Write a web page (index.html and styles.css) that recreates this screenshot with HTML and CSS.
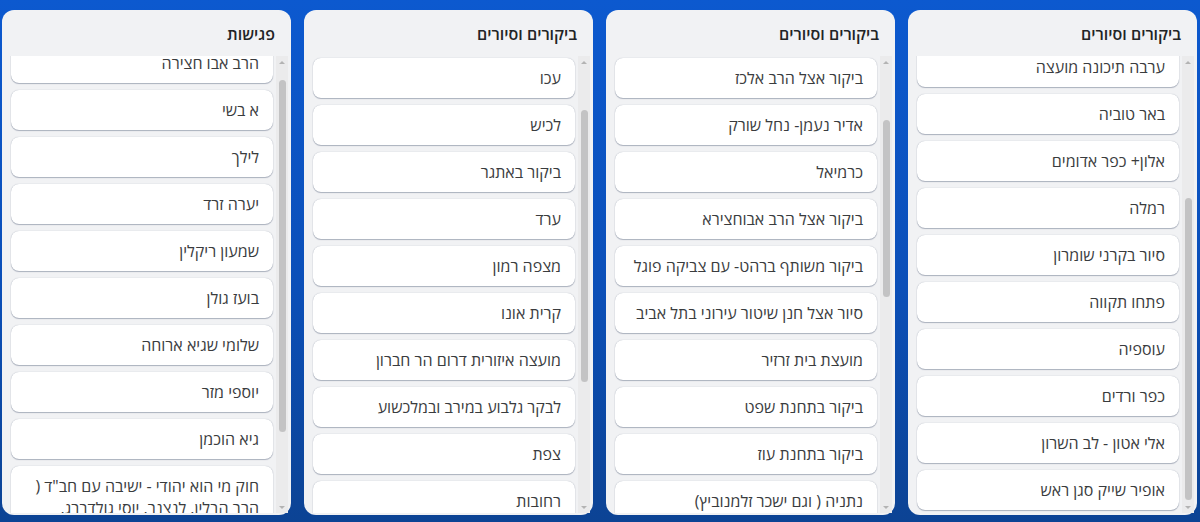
FILE: index.html
```html
<!DOCTYPE html>
<html lang="he">
<head>
<meta charset="utf-8">
<title>לוח</title>
<link rel="stylesheet" href="styles.css">
</head>
<body>
<main class="board" dir="rtl">
  <section class="column">
    <h2 class="column-title">ביקורים וסיורים</h2>
    <div class="list-area">
      <div class="list" data-scroll="11">
        <div class="card">ערבה תיכונה מועצה</div>
        <div class="card">באר טוביה</div>
        <div class="card">אלון+ כפר אדומים</div>
        <div class="card">רמלה</div>
        <div class="card">סיור בקרני שומרון</div>
        <div class="card">פתחו תקווה</div>
        <div class="card">עוספיה</div>
        <div class="card">כפר ורדים</div>
        <div class="card">אלי אטון - לב השרון</div>
        <div class="card">אופיר שייק סגן ראש</div>
      </div>
      <div class="scrollbar" aria-hidden="true">
        <span class="sb-arrow sb-arrow--up"></span>
        <span class="sb-track"><span class="sb-thumb" style="margin-top:130px;height:302px"></span></span>
        <span class="sb-arrow sb-arrow--down"></span>
      </div>
    </div>
  </section>
  <section class="column">
    <h2 class="column-title">ביקורים וסיורים</h2>
    <div class="list-area">
      <div class="list" data-scroll="0">
        <div class="card">ביקור אצל הרב אלכז</div>
        <div class="card">אדיר נעמן- נחל שורק</div>
        <div class="card">כרמיאל</div>
        <div class="card">ביקור אצל הרב אבוחצירא</div>
        <div class="card">ביקור משותף ברהט- עם צביקה פוגל</div>
        <div class="card">סיור אצל חנן שיטור עירוני בתל אביב</div>
        <div class="card">מועצת בית זרזיר</div>
        <div class="card">ביקור בתחנת שפט</div>
        <div class="card">ביקור בתחנת עוז</div>
        <div class="card">נתניה ( וגם ישכר זלמנוביץ)</div>
      </div>
      <div class="scrollbar" aria-hidden="true">
        <span class="sb-arrow sb-arrow--up"></span>
        <span class="sb-track"><span class="sb-thumb" style="margin-top:52px;height:177px"></span></span>
        <span class="sb-arrow sb-arrow--down"></span>
      </div>
    </div>
  </section>
  <section class="column">
    <h2 class="column-title">ביקורים וסיורים</h2>
    <div class="list-area">
      <div class="list" data-scroll="0">
        <div class="card">עכו</div>
        <div class="card">לכיש</div>
        <div class="card">ביקור באתגר</div>
        <div class="card">ערד</div>
        <div class="card">מצפה רמון</div>
        <div class="card">קרית אונו</div>
        <div class="card">מועצה איזורית דרום הר חברון</div>
        <div class="card">לבקר גלבוע במירב ובמלכשוע</div>
        <div class="card">צפת</div>
        <div class="card">רחובות</div>
      </div>
      <div class="scrollbar" aria-hidden="true">
        <span class="sb-arrow sb-arrow--up"></span>
        <span class="sb-track"><span class="sb-thumb" style="margin-top:42px;height:272px"></span></span>
        <span class="sb-arrow sb-arrow--down"></span>
      </div>
    </div>
  </section>
  <section class="column">
    <h2 class="column-title">פגישות</h2>
    <div class="list-area">
      <div class="list" data-scroll="15">
        <div class="card">הרב אבו חצירה</div>
        <div class="card">א בשי</div>
        <div class="card">לילך</div>
        <div class="card">יערה זרד</div>
        <div class="card">שמעון ריקלין</div>
        <div class="card">בועז גולן</div>
        <div class="card">שלומי שגיא ארוחה</div>
        <div class="card">יוספי מזר</div>
        <div class="card">גיא הוכמן</div>
        <div class="card">חוק מי הוא יהודי - ישיבה עם חב"ד ( הרב הבלין, לנצנר, יוסי גולדברג,</div>
      </div>
      <div class="scrollbar" aria-hidden="true">
        <span class="sb-arrow sb-arrow--up"></span>
        <span class="sb-track"><span class="sb-thumb" style="margin-top:12px;height:352px"></span></span>
        <span class="sb-arrow sb-arrow--down"></span>
      </div>
    </div>
  </section>
</main>
<script src="script.js"></script>
</body>
</html>
```

FILE: styles.css
```css
* {
  box-sizing: border-box;
}

html, body {
  margin: 0;
  height: 100%;
}

body {
  background: linear-gradient(to bottom, #0c59cf 0%, #0b4fb8 55%, #0c4394 100%);
  font-family: "Open Sans", "Liberation Sans", Arial, sans-serif;
  overflow: hidden;
}

.board {
  display: flex;
  gap: 13px;
  padding: 10px 3px 0 2px;
  align-items: flex-start;
}

.column {
  flex: 0 0 289px;
  width: 289px;
  height: 505px;
  background: #f1f2f4;
  border-radius: 12px;
  display: flex;
  flex-direction: column;
  padding-bottom: 2px;
}

.column-title {
  margin: 0;
  padding: 14px 16px 12px;
  font-size: 16px;
  line-height: 20px;
  font-weight: 600;
  color: #222426;
  text-align: right;
}

.list-area {
  flex: 1;
  min-height: 0;
  display: flex;
  direction: ltr;
  margin-right: 3px;
}

.list {
  flex: 1;
  min-width: 0;
  overflow: hidden;
  display: flex;
  flex-direction: column;
  gap: 7px;
  padding: 2px 3px 4px 9px;
}

.card {
  flex: 0 0 auto;
  direction: rtl;
  text-align: right;
  background: #ffffff;
  border-radius: 8px;
  box-shadow: 0 1px 1px rgba(9, 30, 66, 0.28), 0 0 1px rgba(9, 30, 66, 0.32);
  padding: 9px 14px 9px 8px;
  font-size: 16px;
  line-height: 22px;
  color: #3a3c3e;
}

.scrollbar {
  flex: 0 0 12px;
  width: 12px;
  display: flex;
  flex-direction: column;
  background: #ebebec;
}

.sb-arrow {
  flex: 0 0 12px;
  display: flex;
  align-items: center;
  justify-content: center;
}

.sb-arrow::before {
  content: "";
  width: 0;
  height: 0;
  border-left: 3px solid transparent;
  border-right: 3px solid transparent;
}

.sb-arrow--up::before {
  border-bottom: 3px solid #b3b3b3;
}

.sb-arrow--down::before {
  border-top: 3px solid #b3b3b3;
}

.sb-track {
  flex: 1;
  min-height: 0;
  display: flex;
  flex-direction: column;
  align-items: center;
}

.sb-thumb {
  flex: 0 0 auto;
  width: 7px;
  border-radius: 4px;
  background: #c3c3c4;
}
```

FILE: script.js
```js
document.querySelectorAll('[data-scroll]').forEach(function (el) {
  el.scrollTop = parseInt(el.getAttribute('data-scroll'), 10);
});
```
